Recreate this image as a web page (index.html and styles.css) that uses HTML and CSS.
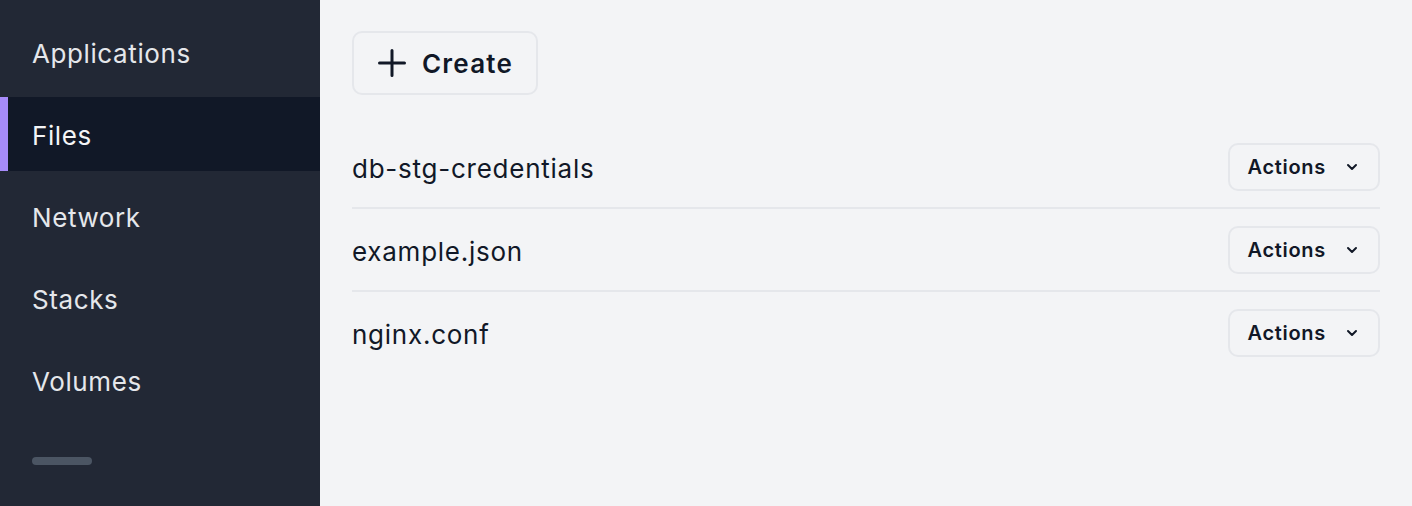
FILE: index.html
```html
<!DOCTYPE html>
<html>
<head>
<meta charset="utf-8">
<link rel="stylesheet" href="styles.css">
</head>
<body>
<div class="app">
  <nav class="sidebar">
    <a class="nav-item">Applications</a>
    <a class="nav-item active">Files</a>
    <a class="nav-item">Network</a>
    <a class="nav-item">Stacks</a>
    <a class="nav-item">Volumes</a>
    <div class="nav-skeleton"></div>
  </nav>
  <main class="main">
    <button class="create-btn">
      <svg class="plus" width="28" height="28" viewBox="0 0 28 28"><path d="M14 1.5v25M1.5 14h25" stroke="#111827" stroke-width="3" stroke-linecap="round" fill="none"/></svg>
      <span>Create</span>
    </button>
    <ul class="file-list">
      <li class="file-row">
        <span class="file-name">db-stg-credentials</span>
        <button class="actions-btn">Actions<svg class="chev" width="12" height="8" viewBox="0 0 12 8"><path d="M2 2l4 4 4-4" stroke="#111827" stroke-width="2" fill="none" stroke-linecap="round" stroke-linejoin="round"/></svg></button>
      </li>
      <li class="file-row">
        <span class="file-name">example.json</span>
        <button class="actions-btn">Actions<svg class="chev" width="12" height="8" viewBox="0 0 12 8"><path d="M2 2l4 4 4-4" stroke="#111827" stroke-width="2" fill="none" stroke-linecap="round" stroke-linejoin="round"/></svg></button>
      </li>
      <li class="file-row">
        <span class="file-name">nginx.conf</span>
        <button class="actions-btn">Actions<svg class="chev" width="12" height="8" viewBox="0 0 12 8"><path d="M2 2l4 4 4-4" stroke="#111827" stroke-width="2" fill="none" stroke-linecap="round" stroke-linejoin="round"/></svg></button>
      </li>
    </ul>
  </main>
</div>
</body>
</html>
```
FILE: styles.css
```css
* { box-sizing: border-box; }
html, body { margin: 0; height: 100%; }
body {
  font-family: Inter, "Noto Sans", sans-serif;
  background: #f3f4f6;
  color: #111827;
  letter-spacing: 0.6px;
}
.app {
  display: flex;
  height: 506px;
}
.sidebar {
  width: 320px;
  flex: none;
  background: #222835;
  display: flex;
  flex-direction: column;
  gap: 8px;
  padding-top: 15px;
}
.nav-item {
  display: flex;
  align-items: center;
  height: 74px;
  padding-top: 2px;
  font-size: 26px;
  color: #e5e7eb;
  border-left: 8px solid transparent;
  padding-left: 24px;
}
.nav-item.active {
  background: #111827;
  border-left-color: #a78bfa;
  color: #f3f4f6;
}
.nav-skeleton {
  margin-top: 32px;
  margin-left: 32px;
  width: 60px;
  height: 8px;
  border-radius: 4px;
  background: #4b5563;
}
.main {
  flex: 1;
  padding: 31px 32px 0 32px;
}
.create-btn {
  display: inline-flex;
  align-items: center;
  gap: 16px;
  height: 64px;
  padding: 0 23px 0 24px;
  background: #f3f4f6;
  border: 2px solid #e5e7eb;
  border-radius: 10px;
  font-family: inherit;
  font-size: 26px;
  font-weight: 600;
  letter-spacing: 1.2px;
  color: #111827;
}
.file-list {
  list-style: none;
  margin: 31px 0 0 0;
  padding: 0;
}
.file-row {
  display: flex;
  align-items: center;
  justify-content: space-between;
  padding: 17px 0 16px 0;
  border-bottom: 2px solid #e5e7eb;
}
.file-row:last-child { border-bottom: none; }
.file-name {
  font-size: 26px;
  letter-spacing: 0.75px;
  padding-top: 3px;
  color: #111827;
}
.actions-btn {
  display: inline-flex;
  align-items: center;
  gap: 20px;
  height: 48px;
  padding: 0 20px 0 18px;
  background: #f3f4f6;
  border: 2px solid #e5e7eb;
  border-radius: 10px;
  font-family: inherit;
  font-size: 20px;
  font-weight: 600;
  letter-spacing: 0.7px;
  color: #111827;
}
```
